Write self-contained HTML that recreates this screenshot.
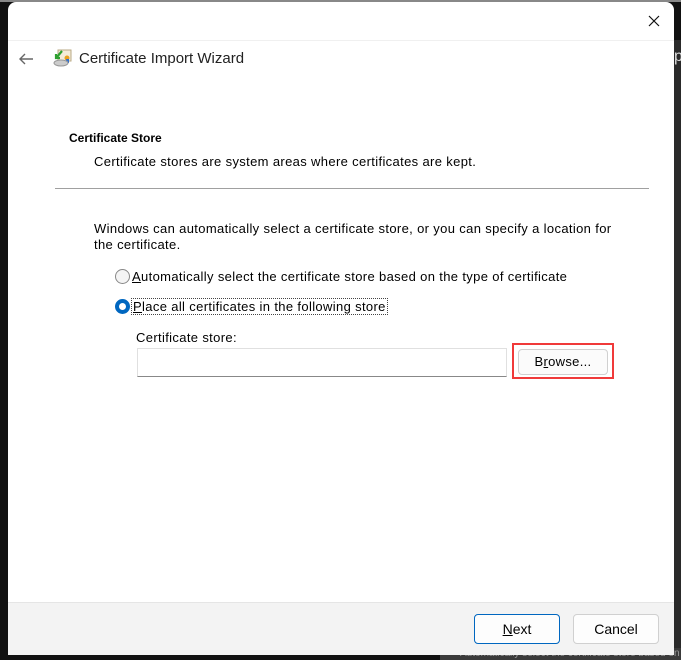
<!DOCTYPE html>
<html><head><style>
body{margin:0;width:681px;height:660px;background:#111;position:relative;overflow:hidden;font-family:"Liberation Sans",sans-serif;font-size:13px;color:#000}
.abs{position:absolute}
.win{left:8px;top:2px;width:666px;height:653px;background:#fff;border-radius:8px 8px 0 0;overflow:hidden}
.t{position:absolute;white-space:nowrap;letter-spacing:0.35px}
</style></head><body>
<div class="abs" style="left:0;top:0;width:681px;height:2px;background:#888"></div>
<div class="abs" style="left:674px;top:40px;width:7px;height:620px;background:#2a2a2a;overflow:hidden"></div>
<div class="abs" style="left:674px;top:48px;width:7px;height:20px;color:#ddd;font-size:16px;overflow:hidden">p</div>
<div class="abs" style="left:440px;top:648px;width:241px;height:12px;background:#3a3a3a;color:#999;font-size:10px;line-height:12px;padding-left:20px;box-sizing:border-box;white-space:nowrap;overflow:hidden">Automatically select the certificate store based on the type</div>
<div class="abs win">
  <div class="abs" style="left:0;top:38px;width:666px;height:1px;background:#f0f0f0"></div>
  <svg class="abs" style="left:640px;top:13px" width="12" height="12"><path d="M1 1L11 11M11 1L1 11" stroke="#111" stroke-width="1.2"/></svg>
  <svg class="abs" style="left:10px;top:50px" width="16" height="14"><path d="M15 7H2M7 2L2 7L7 12" stroke="#666" stroke-width="1.4" fill="none"/></svg>
  <svg class="abs" style="left:44px;top:46px" width="20" height="20"><rect x="6" y="2" width="13" height="11" fill="#f4ecd8" stroke="#b9a985"/><circle cx="15" cy="10" r="2.5" fill="#e8a020"/><rect x="14" y="11" width="3" height="4" fill="#3070d0"/><ellipse cx="9" cy="15" rx="7" ry="3" fill="#ccc" stroke="#999"/><path d="M10 3L5 9M4 6v4h4" stroke="#2ea030" stroke-width="2.2" fill="none"/></svg>
  <div class="t" style="left:71px;top:48px;font-size:15px;color:#222;letter-spacing:0">Certificate Import Wizard</div>
  <div class="t" style="left:61px;top:129px;font-size:12px;font-weight:bold;letter-spacing:0">Certificate Store</div>
  <div class="t" style="left:86px;top:152px">Certificate stores are system areas where certificates are kept.</div>
  <div class="abs" style="left:47px;top:186px;width:594px;height:1px;background:#a0a0a0"></div>
  <div class="t" style="left:86px;top:219px;line-height:16px">Windows can automatically select a certificate store, or you can specify a location for<br>the certificate.</div>
  <div class="abs" style="left:107px;top:267px;width:13px;height:13px;border:1px solid #888;border-radius:50%;background:#f4f4f4"></div>
  <div class="t" style="left:124px;top:267px"><u>A</u>utomatically select the certificate store based on the type of certificate</div>
  <div class="abs" style="left:107px;top:297px;width:7px;height:7px;border:4px solid #0067c0;border-radius:50%;background:#fff"></div>
  <div class="t" style="left:124px;top:297px;outline:1px dotted #444;padding:0 1px"><u>P</u>lace all certificates in the following store</div>
  <div class="t" style="left:128px;top:328px">Certificate store:</div>
  <div class="abs" style="left:129px;top:346px;width:368px;height:27px;border:1px solid #e0e0e0;border-bottom-color:#888;background:#fff"></div>
  <div class="abs" style="left:504px;top:341px;width:98px;height:32px;border:2px solid #f03a3a"></div>
  <div class="abs" style="left:510px;top:347px;width:88px;height:24px;border:1px solid #d0d0d0;border-radius:4px;background:#fbfbfb;text-align:center;line-height:24px;letter-spacing:0.3px">B<u>r</u>owse...</div>
  <div class="abs" style="left:0;top:600px;width:666px;height:53px;background:#f3f3f3;border-top:1px solid #e5e5e5"></div>
  <div class="abs" style="left:466px;top:612px;width:84px;height:28px;border:1px solid #0067c0;border-radius:4px;background:#fdfdfd;text-align:center;line-height:28px;font-size:14px"><u>N</u>ext</div>
  <div class="abs" style="left:565px;top:612px;width:84px;height:28px;border:1px solid #d0d0d0;border-radius:4px;background:#fdfdfd;text-align:center;line-height:28px;font-size:14px">Cancel</div>
</div>
</body></html>
